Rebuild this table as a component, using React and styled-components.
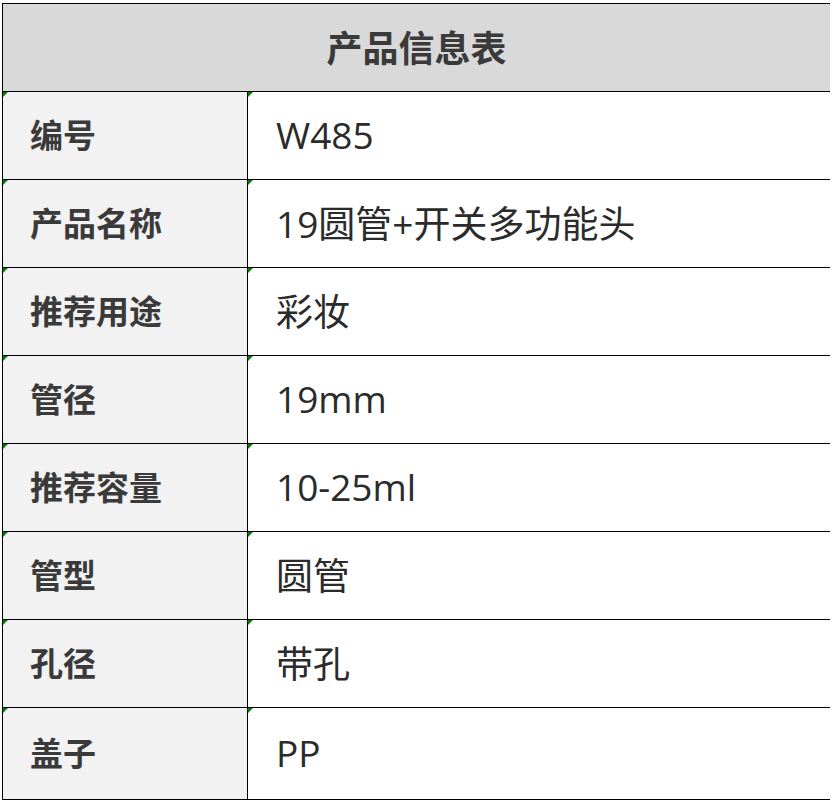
import React from "react";
import styled, { createGlobalStyle } from "styled-components";

const rows = [
  ["编号", "W485"],
  ["产品名称", "19圆管+开关多功能头"],
  ["推荐用途", "彩妆"],
  ["管径", "19mm"],
  ["推荐容量", "10-25ml"],
  ["管型", "圆管"],
  ["孔径", "带孔"],
  ["盖子", "PP"],
];

const App = () => {
  return (
    <Page>
      <GlobalStyle />
      <Sheet>
        <Title>产品信息表</Title>
        {rows.map(([label, value], i) => (
          <React.Fragment key={label}>
            <Label $last={i === rows.length - 1}>
              <Mark />
              {label}
            </Label>
            <Value $last={i === rows.length - 1}>
              <Mark />
              {value}
            </Value>
          </React.Fragment>
        ))}
      </Sheet>
    </Page>
  );
};

export default App;

const GlobalStyle = createGlobalStyle`
  body {
    margin: 0;
    background: #ffffff;
  }
`;

const Page = styled.div`
  width: 832px;
  height: 802px;
  padding: 3px 0 0 2px;
  box-sizing: border-box;
  font-family: "Open Sans", "Noto Sans CJK SC", sans-serif;
  color: #2b2b2b;
`;

const Sheet = styled.div`
  display: grid;
  grid-template-columns: 245px 582px;
  grid-template-rows: 88px repeat(7, 88px) 91px;
  width: 828px;
  border: 1px solid #000000;
  box-sizing: border-box;
`;

const Title = styled.div`
  grid-column: 1 / span 2;
  display: flex;
  align-items: center;
  justify-content: center;
  padding-bottom: 3px;
  background: #d9d9d9;
  border-bottom: 1px solid #000000;
  font-family: "Noto Sans CJK SC", sans-serif;
  font-weight: 700;
  font-size: 36px;
  color: #3a3a3a;
`;

const Cell = styled.div`
  position: relative;
  display: flex;
  align-items: center;
  padding-bottom: 3px;
  border-bottom: ${(p) => (p.$last ? "none" : "1px solid #000000")};
  box-sizing: border-box;
`;

const Label = styled(Cell)`
  background: #f2f2f2;
  border-right: 1px solid #000000;
  padding-left: 27px;
  font-family: "Noto Sans CJK SC", sans-serif;
  font-weight: 700;
  font-size: 33px;
  color: #3a3a3a;
`;

const Value = styled(Cell)`
  background: #ffffff;
  padding-left: 28px;
  font-size: 37px;
`;

const Mark = styled.span`
  position: absolute;
  top: 0;
  left: 0;
  width: 0;
  height: 0;
  border-top: 5px solid #008000;
  border-right: 5px solid transparent;
`;
